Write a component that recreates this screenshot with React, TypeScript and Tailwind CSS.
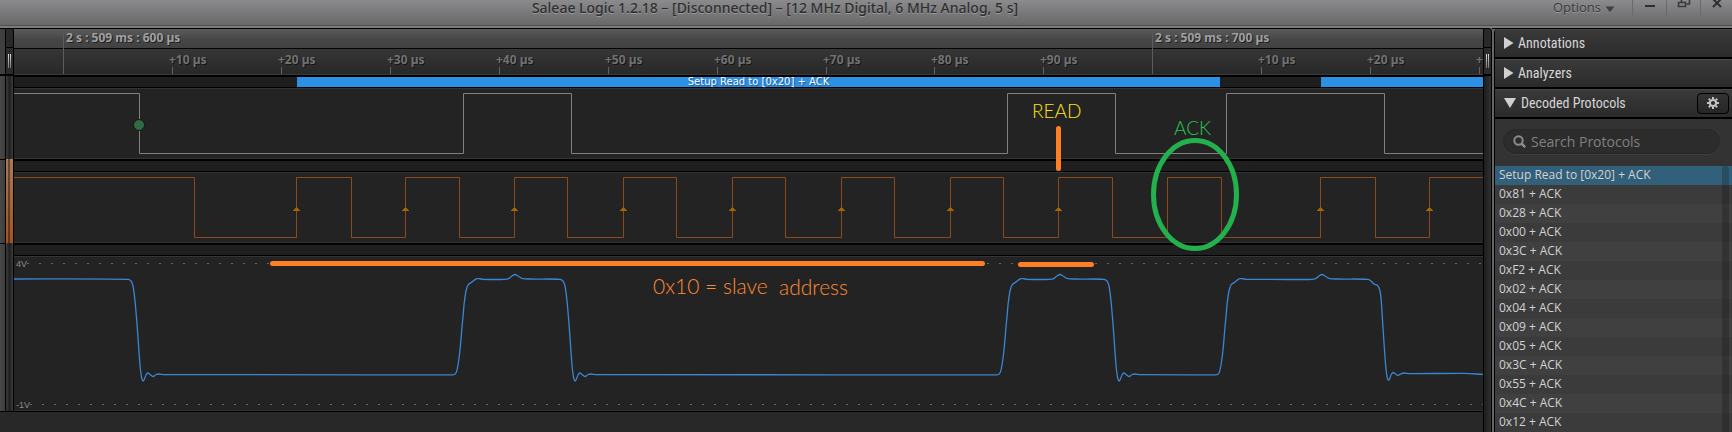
import React from "react";

type Point = [number, number];

const TICK_START = 63.2;
const TICK_STEP = 108.9;
const TRACE_LEFT = 14;

const sdaEdges = [139, 463, 571, 1007, 1115, 1226, 1384];
const sclEdges = [
  194, 296, 351, 405, 459, 514, 567, 623, 676, 732, 785, 841, 894, 950, 1003, 1058, 1112, 1167, 1221, 1320, 1375, 1429,
];
const sampleMarks = [296, 405, 514, 623, 732, 841, 950, 1058, 1320, 1429];

const frames = [
  "0x81 + ACK",
  "0x28 + ACK",
  "0x00 + ACK",
  "0x3C + ACK",
  "0xF2 + ACK",
  "0x02 + ACK",
  "0x04 + ACK",
  "0x09 + ACK",
  "0x05 + ACK",
  "0x3C + ACK",
  "0x55 + ACK",
  "0x4C + ACK",
  "0x12 + ACK",
];

/* Square wave that starts high and toggles at every edge. */
function squareWave(edges: number[], high: number, low: number): string {
  let level = high;
  let d = `M0 ${high + 0.5}`;
  for (const edge of edges) {
    const x = edge - TRACE_LEFT + 0.5;
    level = level === high ? low : high;
    d += `H${x}V${level + 0.5}`;
  }
  return d + "H4000";
}

const fall: Point[] = [
  [-11, 22.3], [-8, 24], [-6, 29], [-4, 44], [-2, 67], [0, 95], [1, 108], [2, 117], [3, 122], [4, 124], [5, 123], [7, 118],
  [9, 116], [11, 117.5], [14, 119.5], [17, 117.5], [20, 117], [25, 117.6],
];
const lateFall: Point[] = [
  [-16, 22.3], [-13, 24], [-10, 27], [-6, 29], [-4, 34], [-3, 41], [-2, 55], [-1, 71], [0, 86], [1, 100], [2, 112], [3, 119],
  [4, 123], [5, 123], [7, 118], [9, 115.5], [11, 116.5], [14, 118.5], [17, 116.8], [20, 116], [25, 116.6],
];
const rise: Point[] = [
  [-10, 117.8], [-7, 116], [-5, 108], [-3, 93], [-1, 70], [0, 60], [1, 48], [3, 34], [5, 28], [9, 25], [13, 21.8], [16, 21.7], [20, 22.3],
];
const bump: Point[] = [
  [-15, 22.5], [-7, 21.8], [-3, 19], [0, 17.5], [3, 19], [7, 21.4], [15, 22],
];

const at = (x: number, shape: Point[]): Point[] => shape.map(([dx, y]) => [x + dx - TRACE_LEFT, y]);

function smooth(points: Point[]): string {
  let d = `M${points[0][0]} ${points[0][1]}`;
  for (let i = 0; i < points.length - 1; i++) {
    const p0 = points[Math.max(i - 1, 0)];
    const p1 = points[i];
    const p2 = points[i + 1];
    const p3 = points[Math.min(i + 2, points.length - 1)];
    const step = (p2[0] - p1[0]) / 3;
    const slope = (a: Point, b: Point, c: Point) =>
      (b[1] - a[1]) * (c[1] - b[1]) <= 0 || c[0] === a[0] ? 0 : (c[1] - a[1]) / (c[0] - a[0]);
    const m1 = slope(p0, p1, p2);
    const m2 = slope(p1, p2, p3);
    d += `C${p1[0] + step} ${p1[1] + m1 * step} ${p2[0] - step} ${p2[1] - m2 * step} ${p2[0]} ${p2[1]}`;
  }
  return d;
}

const analogPath = smooth([
  [0, 22],
  ...at(139, fall),
  ...at(463, rise),
  ...at(515, bump),
  ...at(571, fall),
  ...at(1007, rise),
  ...at(1060, bump),
  ...at(1115, fall),
  ...at(1226, rise),
  ...at(1322, bump),
  ...at(1384, lateFall),
  [1450, 116.4],
  [1475, 117.6],
]);

function Grip() {
  return (
    <div className="flex h-[26px] w-full items-center justify-center gap-px bg-[#2b2b2b]">
      <span className="h-[14px] w-px bg-linear-to-b from-[#dddddd] to-[#777777]" />
      <span className="h-[14px] w-px bg-linear-to-b from-[#dddddd] to-[#777777]" />
    </div>
  );
}

function TitleBar() {
  return (
    <header className="flex h-[28px] shrink-0 items-start border-b-2 border-[#7c7c7c] bg-linear-to-b from-[#8b8b8e] to-[#676767] font-['Noto_Sans',sans-serif] text-[#2f2f2f] shadow-[inset_0_-1px_0_#505050]">
      <h1 className="min-w-0 flex-1 text-center text-[14px] leading-4 font-medium whitespace-nowrap [text-shadow:0_1px_0_#99999b]">
        Saleae Logic 1.2.18 – [Disconnected] – [12 MHz Digital, 6 MHz Analog, 5 s]
      </h1>
      <div className="flex w-[182px] items-start">
        <button
          type="button"
          className="flex w-[82px] items-center gap-1 pl-[3px] font-['Open_Sans',sans-serif] text-[13px] leading-[14px] text-[#3a3a3a] [text-shadow:0_1px_0_#99999b]"
        >
          Options
          <svg className="mt-1 h-[6px] w-[10px]" viewBox="0 0 10 6" aria-hidden="true">
            <path d="M0.5 0.5h9L5 6z" fill="#3f3f3f" />
          </svg>
        </button>
        <button type="button" aria-label="Minimize" className="flex h-4 w-[34px] justify-center border-l border-[#6a6a6b]">
          <svg className="h-4 w-4" viewBox="0 0 16 16" aria-hidden="true">
            <path d="M3 5h10v2H3z" fill="#2e2e2e" />
          </svg>
        </button>
        <button type="button" aria-label="Restore" className="flex h-4 w-[34px] justify-center border-l border-[#6a6a6b]">
          <svg className="h-4 w-4" viewBox="0 0 16 16" fill="none" stroke="#3a3a3a" aria-hidden="true">
            <path d="M5.5 2V-1h8v5h-3M2.5 2.5h7v4h-7z" strokeWidth="1.6" />
          </svg>
        </button>
        <button type="button" aria-label="Close" className="flex h-4 w-8 justify-center border-l border-[#6a6a6b]">
          <svg className="h-4 w-4" viewBox="0 0 16 16" fill="none" stroke="#2e2e2e" aria-hidden="true">
            <path d="M4 -1l8 8M12 -1l-8 8" strokeWidth="2" />
          </svg>
        </button>
      </div>
    </header>
  );
}

function LeftEdge() {
  return (
    <div className="flex shrink-0 flex-col">
      <div className="flex">
        <div className="flex w-[5px] flex-col">
          <div className="h-[45px] bg-[#3f3f3f]" />
          <div className="h-[85px] border-t-2 border-black bg-linear-to-r from-[#484848] to-[#3e3e3e]" />
          <div className="h-[84px] border-t border-black bg-linear-to-r from-[#484848] to-[#3e3e3e]" />
          <div className="h-[168px] border-t border-black bg-linear-to-r from-[#484848] to-[#3e3e3e]" />
        </div>
        <div className="flex w-[9px] flex-col border-x border-black">
          <div className="h-[19px] border-b border-black bg-[#292929]" />
          <Grip />
          <div className="h-[85px] border-t-2 border-black bg-linear-to-r from-[#3c3c3c] via-[#202020] to-[#3c3c3c]" />
          <div className="flex h-[84px] bg-linear-to-b from-[#a9795a] to-[#a1541f] pl-[2px]">
            <span className="h-full w-[2px] bg-black/40" />
          </div>
          <div className="h-[168px] bg-linear-to-r from-[#3c3c3c] via-[#202020] to-[#3c3c3c]" />
        </div>
      </div>
      <div className="flex-1 border-t border-black" />
    </div>
  );
}

function RightEdge() {
  return (
    <div className="flex w-[9px] shrink-0 flex-col overflow-hidden rounded-tr border-x border-black">
      <div className="h-[19px] border-b border-black bg-[#292929]" />
      <Grip />
      <div className="flex-1 border-t-2 border-black bg-linear-to-r from-[#1d1d1d] to-[#303030]" />
    </div>
  );
}

function Ruler() {
  const ticks = Array.from({ length: 14 }, (_, i) => i);
  return (
    <svg className="block h-[46px] w-full font-['Noto_Sans',sans-serif] font-bold" aria-label="Time ruler">
      <defs>
        <linearGradient id="coarse" x1="0" y1="0" x2="0" y2="1">
          <stop offset="0" stopColor="#5c5c5c" />
          <stop offset="0.55" stopColor="#464646" />
          <stop offset="1" stopColor="#424242" />
        </linearGradient>
        <linearGradient id="fine" x1="0" y1="0" x2="0" y2="1">
          <stop offset="0" stopColor="#363636" />
          <stop offset="1" stopColor="#282828" />
        </linearGradient>
      </defs>
      <rect width="100%" height="19" fill="url(#coarse)" />
      <rect y="19" width="100%" height="1" fill="#050505" />
      <rect y="20" width="100%" height="25" fill="url(#fine)" />
      <rect y="45" width="100%" height="1" fill="#3a3a3a" />
      {ticks.map((i) => {
        const x = Math.round(TICK_START + i * TICK_STEP) - TRACE_LEFT;
        const major = i % 10 === 0;
        return major ? (
          <g key={i}>
            <path d={`M${x + 0.5} 5V45`} stroke="#5c5c5c" />
            <text x={x + 3} y="13" fontSize="12" fill="#a0a0a0" className="[text-shadow:1px_1px_0_#222222]">
              {`2 s : 509 ms : ${600 + i * 10} µs`}
            </text>
          </g>
        ) : (
          <g key={i}>
            <path d={`M${x + 0.5} 38V45`} stroke="#636363" />
            <text x={x - 3} y="35" fontSize="12" fill="#727272" className="[text-shadow:1px_1px_0_#151515]">
              {`+${(i % 10) * 10} µs`}
            </text>
          </g>
        );
      })}
    </svg>
  );
}

function Tracks() {
  return (
    <div className="flex min-w-0 flex-1 flex-col">
      <Ruler />
      <div className="flex h-[13px] border-t-2 border-b border-black bg-[#1e1e1e] pl-[283px]">
        <div className="w-[923px] shrink-0 bg-[#2b90e6] text-center font-['DejaVu_Sans',sans-serif] text-[10px] leading-[10px] text-white [text-shadow:1px_1px_1px_#16548c]">
          Setup Read to [0x20] + ACK
        </div>
        <div className="ml-[101px] flex-1 bg-[#2b90e6]" />
      </div>
      <svg className="block h-[71px] w-full border-y border-[#333333] bg-[#232323]" aria-label="Digital channel 0">
        <path d={squareWave(sdaEdges, 4, 64)} fill="none" stroke="#808080" />
        <circle cx="125" cy="36" r="5.5" fill="#2f6b43" stroke="#101a13" />
      </svg>
      <div className="h-[13px] border-t-2 border-b border-black bg-[#1f1f1f]" />
      <svg className="block h-[71px] w-full border-y border-[#333333] bg-[#232323]" aria-label="Digital channel 1">
        <path d={squareWave(sclEdges, 4, 64)} fill="none" stroke="#8a4a1c" />
        {sampleMarks.map((x) => (
          <path key={x} d={`M${x - TRACE_LEFT} 34h1v1h1v1h1v1h1v1h-7v-1h1v-1h1v-1h1z`} fill="#a86200" />
        ))}
      </svg>
      <div className="h-[13px] border-t-2 border-b border-black bg-[#1f1f1f]" />
      <svg className="block h-[155px] w-full border-y border-[#333333] bg-[#232323] font-['Liberation_Sans',sans-serif]" aria-label="Analog channel 0">
        <path d="M13 6.5H4000" stroke="#666666" strokeDasharray="2 10" />
        <path d="M16 147.5H4000" stroke="#666666" strokeDasharray="2 10" />
        <text x="2" y="10" fontSize="9" fill="#8c8c8c">4V</text>
        <text x="2" y="151" fontSize="9" fill="#8c8c8c">-1V</text>
        <path d={analogPath} fill="none" stroke="#3b86d2" strokeWidth="1.3" />
      </svg>
      <div className="flex-1 border-t border-black bg-[#282828]" />
    </div>
  );
}

function Markup() {
  return (
    <div className="pointer-events-none absolute inset-0 font-['Lato',sans-serif] leading-6 font-light">
      <svg className="absolute inset-0 h-full w-full" aria-hidden="true">
        <g stroke="#ff7f27" strokeWidth="5" strokeLinecap="round">
          <path d="M272.5 234.5H982.5M1020.5 235.5H1091.5M1058.5 99.5V139.5" />
        </g>
        <ellipse cx="1195" cy="165.5" rx="41.5" ry="54" fill="none" stroke="#22b14c" strokeWidth="5" />
      </svg>
      <span className="absolute top-[70px] left-[1032px] text-[19px] text-[#ffe11a]">READ</span>
      <span className="absolute top-[87px] left-[1174px] text-[19px] text-[#26c455]">ACK</span>
      <span className="absolute top-[245px] left-[653px] text-[21px] text-[#ff8a35]">0x10 = slave</span>
      <span className="absolute top-[246px] left-[779px] text-[21px] text-[#ff8a35]">address</span>
    </div>
  );
}

function SectionHeader({ title, open = false }: { title: string; open?: boolean }) {
  return (
    <div className="flex h-[30px] items-center border-b-2 border-black bg-linear-to-b from-[#3a3a3a] to-[#2b2b2b] pr-[3px] shadow-[inset_0_1px_0_#484848]">
      <button
        type="button"
        aria-expanded={open}
        className={`flex h-full flex-1 items-center pl-[9px] text-left font-['Roboto_Condensed','Liberation_Sans_Narrow',sans-serif] text-[14px] text-[#d6d6d6] ${open ? "gap-[5px]" : "gap-1"}`}
      >
        {open ? (
          <svg className="h-[10px] w-3" viewBox="0 0 12 10" aria-hidden="true">
            <path d="M0 0h12L6 10z" fill="#d0d0d0" />
          </svg>
        ) : (
          <svg className="h-3 w-[10px]" viewBox="0 0 10 12" aria-hidden="true">
            <path d="M0 0v12l9.5-6z" fill="#d0d0d0" />
          </svg>
        )}
        {title}
      </button>
      {open && (
        <button
          type="button"
          aria-label="Protocol settings"
          className="flex h-[21px] w-8 items-center justify-center rounded border border-black bg-linear-to-b from-[#333333] to-[#262626]"
        >
          <svg className="h-3 w-3" viewBox="0 0 12 12" fill="none" stroke="#c4c4c4" aria-hidden="true">
            <circle cx="6" cy="6" r="3.1" strokeWidth="2" />
            <path d="M6 0v2M6 10v2M0 6h2M10 6h2M1.8 1.8l1.3 1.3M8.9 8.9l1.3 1.3M10.2 1.8L8.9 3.1M3.1 8.9l-1.3 1.3" strokeWidth="2" />
          </svg>
        </button>
      )}
    </div>
  );
}

function Sidebar() {
  return (
    <aside className="ml-[2px] flex w-[238px] shrink-0 flex-col overflow-hidden rounded-tl border-l border-black bg-[#333333] font-['Open_Sans',sans-serif]">
      <SectionHeader title="Annotations" />
      <SectionHeader title="Analyzers" />
      <SectionHeader title="Decoded Protocols" open />
      <label className="mx-2 mt-[10px] mb-3 flex h-[25px] w-[217px] items-center gap-[5px] rounded-full border border-[#272727] bg-[#2c2c2c] pl-[9px] shadow-[0_1px_0_#3d3d3d]">
        <svg className="h-[13px] w-[13px] shrink-0" viewBox="0 0 13 13" fill="none" stroke="#8c8c8c" aria-hidden="true">
          <circle cx="5.5" cy="5.5" r="4.2" strokeWidth="2" />
          <path d="M8.5 8.5l3.7 3.7" strokeWidth="2.5" />
        </svg>
        <input
          type="text"
          aria-label="Search Protocols"
          placeholder="Search Protocols"
          className="min-w-0 flex-1 bg-transparent text-[14px] text-[#cccccc] outline-none placeholder:text-[#808080]"
        />
      </label>
      <div className="relative flex-1">
        <ul className="text-[12px] leading-[17px] text-[#d2d2d2]">
          <li className="bg-[#325f79] pb-[2px] pl-1">Setup Read to [0x20] + ACK</li>
          {frames.map((frame, i) => (
            <li key={i} className="pb-[2px] pl-1 even:bg-[#3b3b3b] odd:bg-[#404040]">
              {frame}
            </li>
          ))}
        </ul>
        <div className="absolute inset-y-0 right-[3px] w-[7px] rounded-t bg-black/20" />
      </div>
    </aside>
  );
}

export default function App() {
  return (
    <div className="flex min-h-screen flex-col overflow-hidden bg-[#282828]">
      <TitleBar />
      <main className="flex flex-1 bg-[#666666]">
        <div className="relative flex min-w-0 flex-1 overflow-hidden rounded-tr border-t border-black bg-[#282828]">
          <LeftEdge />
          <Tracks />
          <RightEdge />
          <Markup />
        </div>
        <div className="flex border-t border-black bg-[#666666]">
          <Sidebar />
        </div>
      </main>
    </div>
  );
}
